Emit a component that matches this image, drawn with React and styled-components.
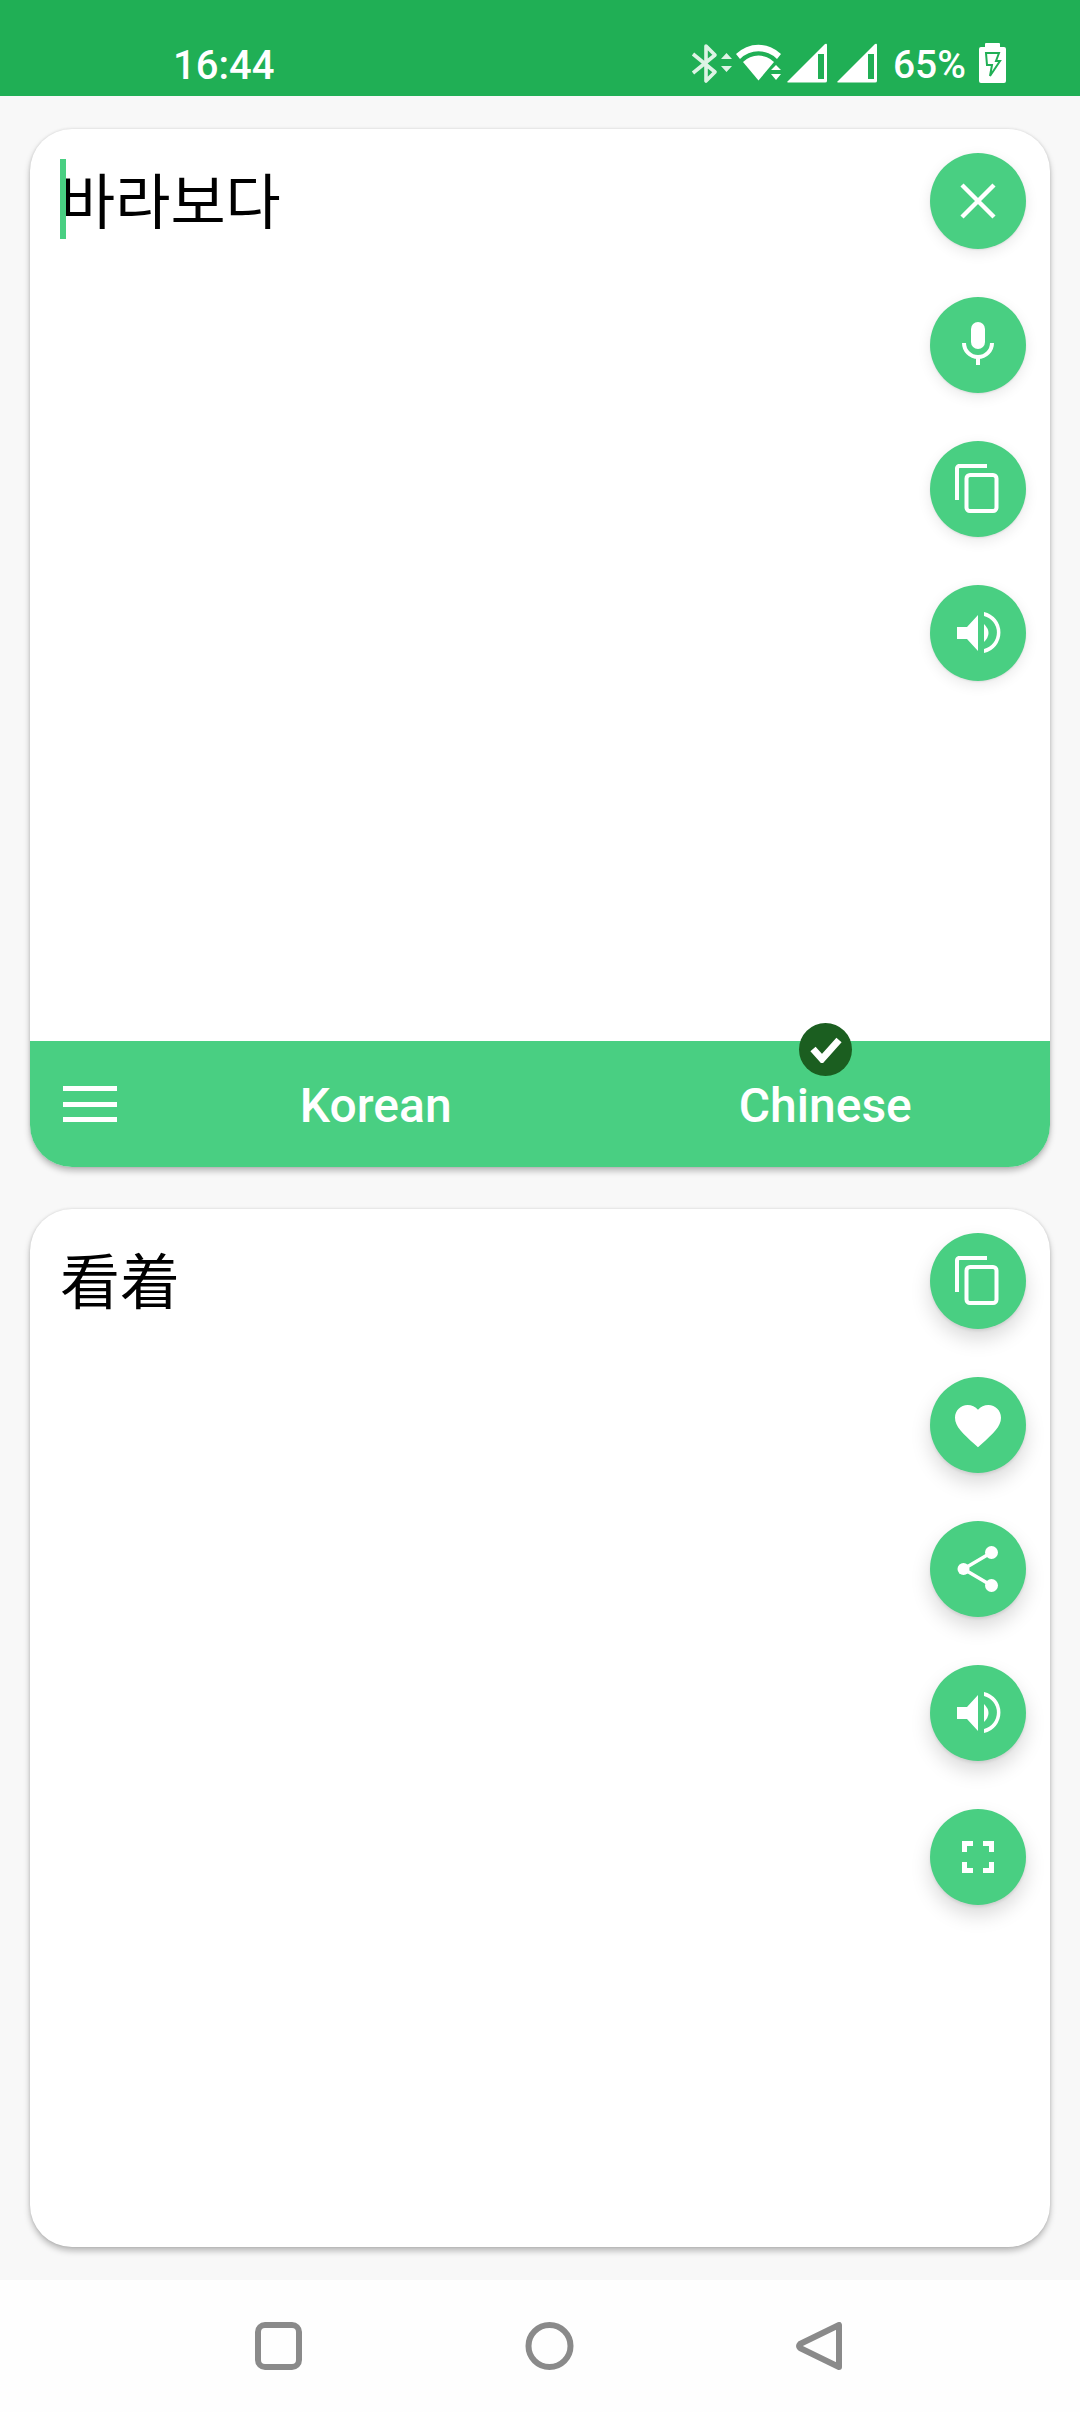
import React from "react";
import styled, { createGlobalStyle } from "styled-components";

const GREEN = "#49cf82";

const Global = createGlobalStyle`
  html, body { margin: 0; padding: 0; background: #f8f8f8; }
  * { box-sizing: border-box; }
`;

const Page = styled.div`
  width: 1080px;
  height: 2412px;
  display: flex;
  flex-direction: column;
  background: #f8f8f8;
  font-family: Roboto, "Liberation Sans", sans-serif;
  overflow: hidden;
`;

const StatusBar = styled.header`
  height: 96px;
  flex: none;
  background: #20af55;
  color: #fff;
  display: flex;
  align-items: center;
  justify-content: space-between;
  padding: 30px 74px 0 173px;
`;

const Clock = styled.span`
  font-size: 40px;
  font-weight: 500;
  line-height: 44px;
  margin-top: 5px;
`;

const StatusIcons = styled.div`
  display: flex;
  align-items: center;
`;

const Percent = styled.span`
  font-size: 39px;
  font-weight: 500;
  line-height: 44px;
  margin: 3px 13px 0 16px;
`;

const StatusIcon = styled.svg`
  display: block;
  flex: none;
  margin-left: ${(p) => p.$gap || 0}px;
`;

const Main = styled.main`
  flex: 1;
  display: flex;
  flex-direction: column;
  gap: 42px;
  padding: 33px 30px;
  min-height: 0;
`;

const Card = styled.section`
  flex: 1;
  min-height: 0;
  display: flex;
  flex-direction: column;
  background: #fff;
  border-radius: 42px;
  box-shadow: 0 4px 6px rgba(0, 0, 0, 0.25), 0 0 3px rgba(0, 0, 0, 0.12);
`;

const CardBody = styled.div`
  flex: 1;
  min-height: 0;
  display: flex;
  justify-content: space-between;
  padding: 24px 24px 0 30px;
`;

const Phrase = styled.div`
  position: relative;
  margin-top: 6px;
  font-size: 60px;
  line-height: 78px;
  height: 80px;
  color: #000;
  font-family: ${(p) =>
    p.$lang === "ko" ? '"Noto Sans CJK KR"' : '"Noto Sans CJK SC"'}, sans-serif;
`;

const Caret = styled.span`
  position: absolute;
  left: 0;
  top: 0;
  width: 6px;
  height: 80px;
  background: ${GREEN};
`;

const FabColumn = styled.div`
  display: flex;
  flex-direction: column;
  gap: 48px;
`;

const Fab = styled.button`
  width: 96px;
  height: 96px;
  border: 0;
  padding: 0;
  border-radius: 50%;
  background: ${GREEN};
  display: flex;
  align-items: center;
  justify-content: center;
  box-shadow: ${(p) =>
    p.$raised
      ? "0 10px 20px rgba(0,0,0,0.15), 0 2px 3px rgba(0,0,0,0.08)"
      : "0 4px 14px rgba(0,0,0,0.09), 0 1px 2px rgba(0,0,0,0.08)"};
`;

const Glyph = styled.svg`
  display: block;
  width: 48px;
  height: 48px;
  overflow: visible;
  fill: #fff;
`;

const Bar = styled.div`
  flex: none;
  height: 126px;
  background: ${GREEN};
  border-radius: 0 0 42px 42px;
  display: grid;
  grid-template-columns: 121px 1fr 1fr;
  align-items: center;
  color: #fff;
`;

const Menu = styled.div`
  width: 54px;
  height: 36px;
  margin: 0 0 0 33px;
  display: flex;
  flex-direction: column;
  justify-content: space-between;
`;

const MenuLine = styled.span`
  display: block;
  height: 5px;
  background: #fff;
`;

const LangCell = styled.div`
  position: relative;
  text-align: center;
  font-size: 48px;
  font-weight: 500;
  line-height: 56px;
  padding-top: 4px;
`;

const Badge = styled.span`
  position: absolute;
  left: 50%;
  top: -51px;
  margin-left: -26px;
  width: 53px;
  height: 53px;
  border-radius: 50%;
  background: #1b5e20;
  display: flex;
  align-items: center;
  justify-content: center;
`;

const NavBar = styled.nav`
  height: 132px;
  flex: none;
  background: #fefefe;
  display: flex;
  align-items: center;
  justify-content: space-between;
  padding: 0 238px 0 255px;
`;

const NavIcon = styled.svg`
  display: block;
  fill: none;
  stroke: #8a8a8a;
  stroke-width: 6;
  stroke-linejoin: round;
`;

const Close = () => (
  <Glyph viewBox="0 0 48 48">
    <path d="M8 8 L40 40 M40 8 L8 40" stroke="#fff" strokeWidth="4.4" fill="none" />
  </Glyph>
);
const Mic = () => (
  <Glyph viewBox="0 0 48 48">
    <rect x="17" y="1" width="14" height="27" rx="7" />
    <path d="M10 22 A14 14 0 0 0 38 22" fill="none" stroke="#fff" strokeWidth="4" />
    <rect x="22" y="35" width="4" height="9" />
  </Glyph>
);
const Copy = () => (
  <Glyph viewBox="0 0 48 48">
    <path d="M33 1 H5 A3 3 0 0 0 3 4 V35" fill="none" stroke="#fff" strokeWidth="4" />
    <rect x="12.5" y="10" width="30" height="36" rx="3.5" fill="none" stroke="#fff" strokeWidth="4" />
  </Glyph>
);
const Speaker = () => (
  <Glyph viewBox="0 0 48 48">
    <path d="M3 18 H13 L24 6 V42 L13 30 H3 Z" />
    <path d="M30 15 Q39 24 30 33 Z" />
    <path d="M30 3 A21 21 0 0 1 30 44 V40 A17 17 0 0 0 30 7 Z" />
  </Glyph>
);
const Heart = () => (
  <Glyph viewBox="0 0 48 48">
    <path
      transform="translate(-3.6 -2.9) scale(2.3)"
      d="M12 21.35l-1.45-1.32C5.4 15.36 2 12.28 2 8.5 2 5.42 4.42 3 7.5 3c1.74 0 3.41.81 4.5 2.09C13.09 3.81 14.76 3 16.5 3 19.58 3 22 5.42 22 8.5c0 3.78-3.4 6.86-8.55 11.54L12 21.35z"
    />
  </Glyph>
);
const Share = () => (
  <Glyph viewBox="0 0 48 48">
    <circle cx="9.5" cy="24" r="6" />
    <circle cx="37.5" cy="7.5" r="6.5" />
    <circle cx="37.5" cy="40.5" r="6.5" />
    <path d="M9.5 24 L37.5 7.5 M9.5 24 L37.5 40.5" stroke="#fff" strokeWidth="3.5" fill="none" />
  </Glyph>
);
const Expand = () => (
  <Glyph viewBox="0 0 48 48">
    <path
      d="M10.5 19 V10.5 H19 M29 10.5 H37.5 V19 M37.5 29 V37.5 H29 M19 37.5 H10.5 V29"
      fill="none"
      stroke="#fff"
      strokeWidth="5"
    />
  </Glyph>
);

const Bluetooth = () => (
  <StatusIcon width="41" height="41" viewBox="0 0 41 41">
    <path
      d="M2 11 L24 29 L15 38 V3 L24 12 L2 30"
      fill="none"
      stroke="#fff"
      strokeOpacity="0.85"
      strokeWidth="3.6"
      strokeLinejoin="round"
    />
    <path d="M30 16 L35.5 10 L41 16 Z M30 23 H41 L35.5 29 Z" fill="#fff" fillOpacity="0.85" />
  </StatusIcon>
);
const Wifi = () => (
  <StatusIcon width="45" height="38" viewBox="0 0 45 38" $gap={4}>
    <path d="M0 10 A32 32 0 0 1 45 10 L41 15 A26 26 0 0 0 4 15 Z" fill="#fff" />
    <path d="M7 18 A22 22 0 0 1 38 18 L22.5 36.5 Z" fill="#fff" />
    <path d="M35 26 L40 21 L45 26 Z M35 30 H45 L40 36 Z" fill="#fff" />
  </StatusIcon>
);
const Signal = ({ gap }) => (
  <StatusIcon width="40" height="40" viewBox="0 0 40 40" $gap={gap}>
    <path
      d="M0 39 L38 1 Q40 0 40 2 V38 Q40 39.500 38 39.500 H1 Z M31 11 V36 H37 V11 Z"
      fill="#fff"
      fillRule="evenodd"
    />
  </StatusIcon>
);
const Battery = () => (
  <StatusIcon width="27" height="40" viewBox="0 0 27 40">
    <path d="M6 1 Q6 0 7 0 H20 Q21 0 21 1 V4 H25 Q27 4 27 6 V38 Q27 40 25 40 H2 Q0 40 0 38 V6 Q0 4 2 4 H6 Z" fill="#fff" />
    <path d="M7 10 H20 L17 18 H21 L11 33 L13 22 H8 Z" fill="#fff" stroke="#20af55" strokeWidth="2" />
  </StatusIcon>
);

export default function App() {
  return (
    <Page>
      <Global />
      <StatusBar>
        <Clock>16:44</Clock>
        <StatusIcons>
          <Bluetooth />
          <Wifi />
          <Signal gap={6} />
          <Signal gap={10} />
          <Percent>65%</Percent>
          <Battery />
        </StatusIcons>
      </StatusBar>
      <Main>
        <Card>
          <CardBody>
            <Phrase $lang="ko">
              <Caret />
              바라보다
            </Phrase>
            <FabColumn>
              <Fab aria-label="clear"><Close /></Fab>
              <Fab aria-label="voice"><Mic /></Fab>
              <Fab aria-label="paste"><Copy /></Fab>
              <Fab aria-label="speak"><Speaker /></Fab>
            </FabColumn>
          </CardBody>
          <Bar>
            <Menu>
              <MenuLine />
              <MenuLine />
              <MenuLine />
            </Menu>
            <LangCell>Korean</LangCell>
            <LangCell>
              Chinese
              <Badge>
                <svg width="34" height="26" viewBox="0 0 34 26">
                  <path d="M4 12 L13 22 L30 3" fill="none" stroke="#fff" strokeWidth="7" />
                </svg>
              </Badge>
            </LangCell>
          </Bar>
        </Card>
        <Card>
          <CardBody>
            <Phrase $lang="zh">看着</Phrase>
            <FabColumn>
              <Fab $raised aria-label="copy"><Copy /></Fab>
              <Fab $raised aria-label="favorite"><Heart /></Fab>
              <Fab $raised aria-label="share"><Share /></Fab>
              <Fab $raised aria-label="speak"><Speaker /></Fab>
              <Fab $raised aria-label="fullscreen"><Expand /></Fab>
            </FabColumn>
          </CardBody>
        </Card>
      </Main>
      <NavBar>
        <NavIcon width="47" height="48" viewBox="0 0 47 48">
          <rect x="3" y="3" width="41" height="42" rx="7" />
        </NavIcon>
        <NavIcon width="49" height="48" viewBox="0 0 49 48">
          <circle cx="24.500" cy="24" r="21" />
        </NavIcon>
        <NavIcon width="46" height="48" viewBox="0 0 46 48">
          <path d="M43 3 V45 L4 26 Q2 24 4 22 Z" />
        </NavIcon>
      </NavBar>
    </Page>
  );
}
